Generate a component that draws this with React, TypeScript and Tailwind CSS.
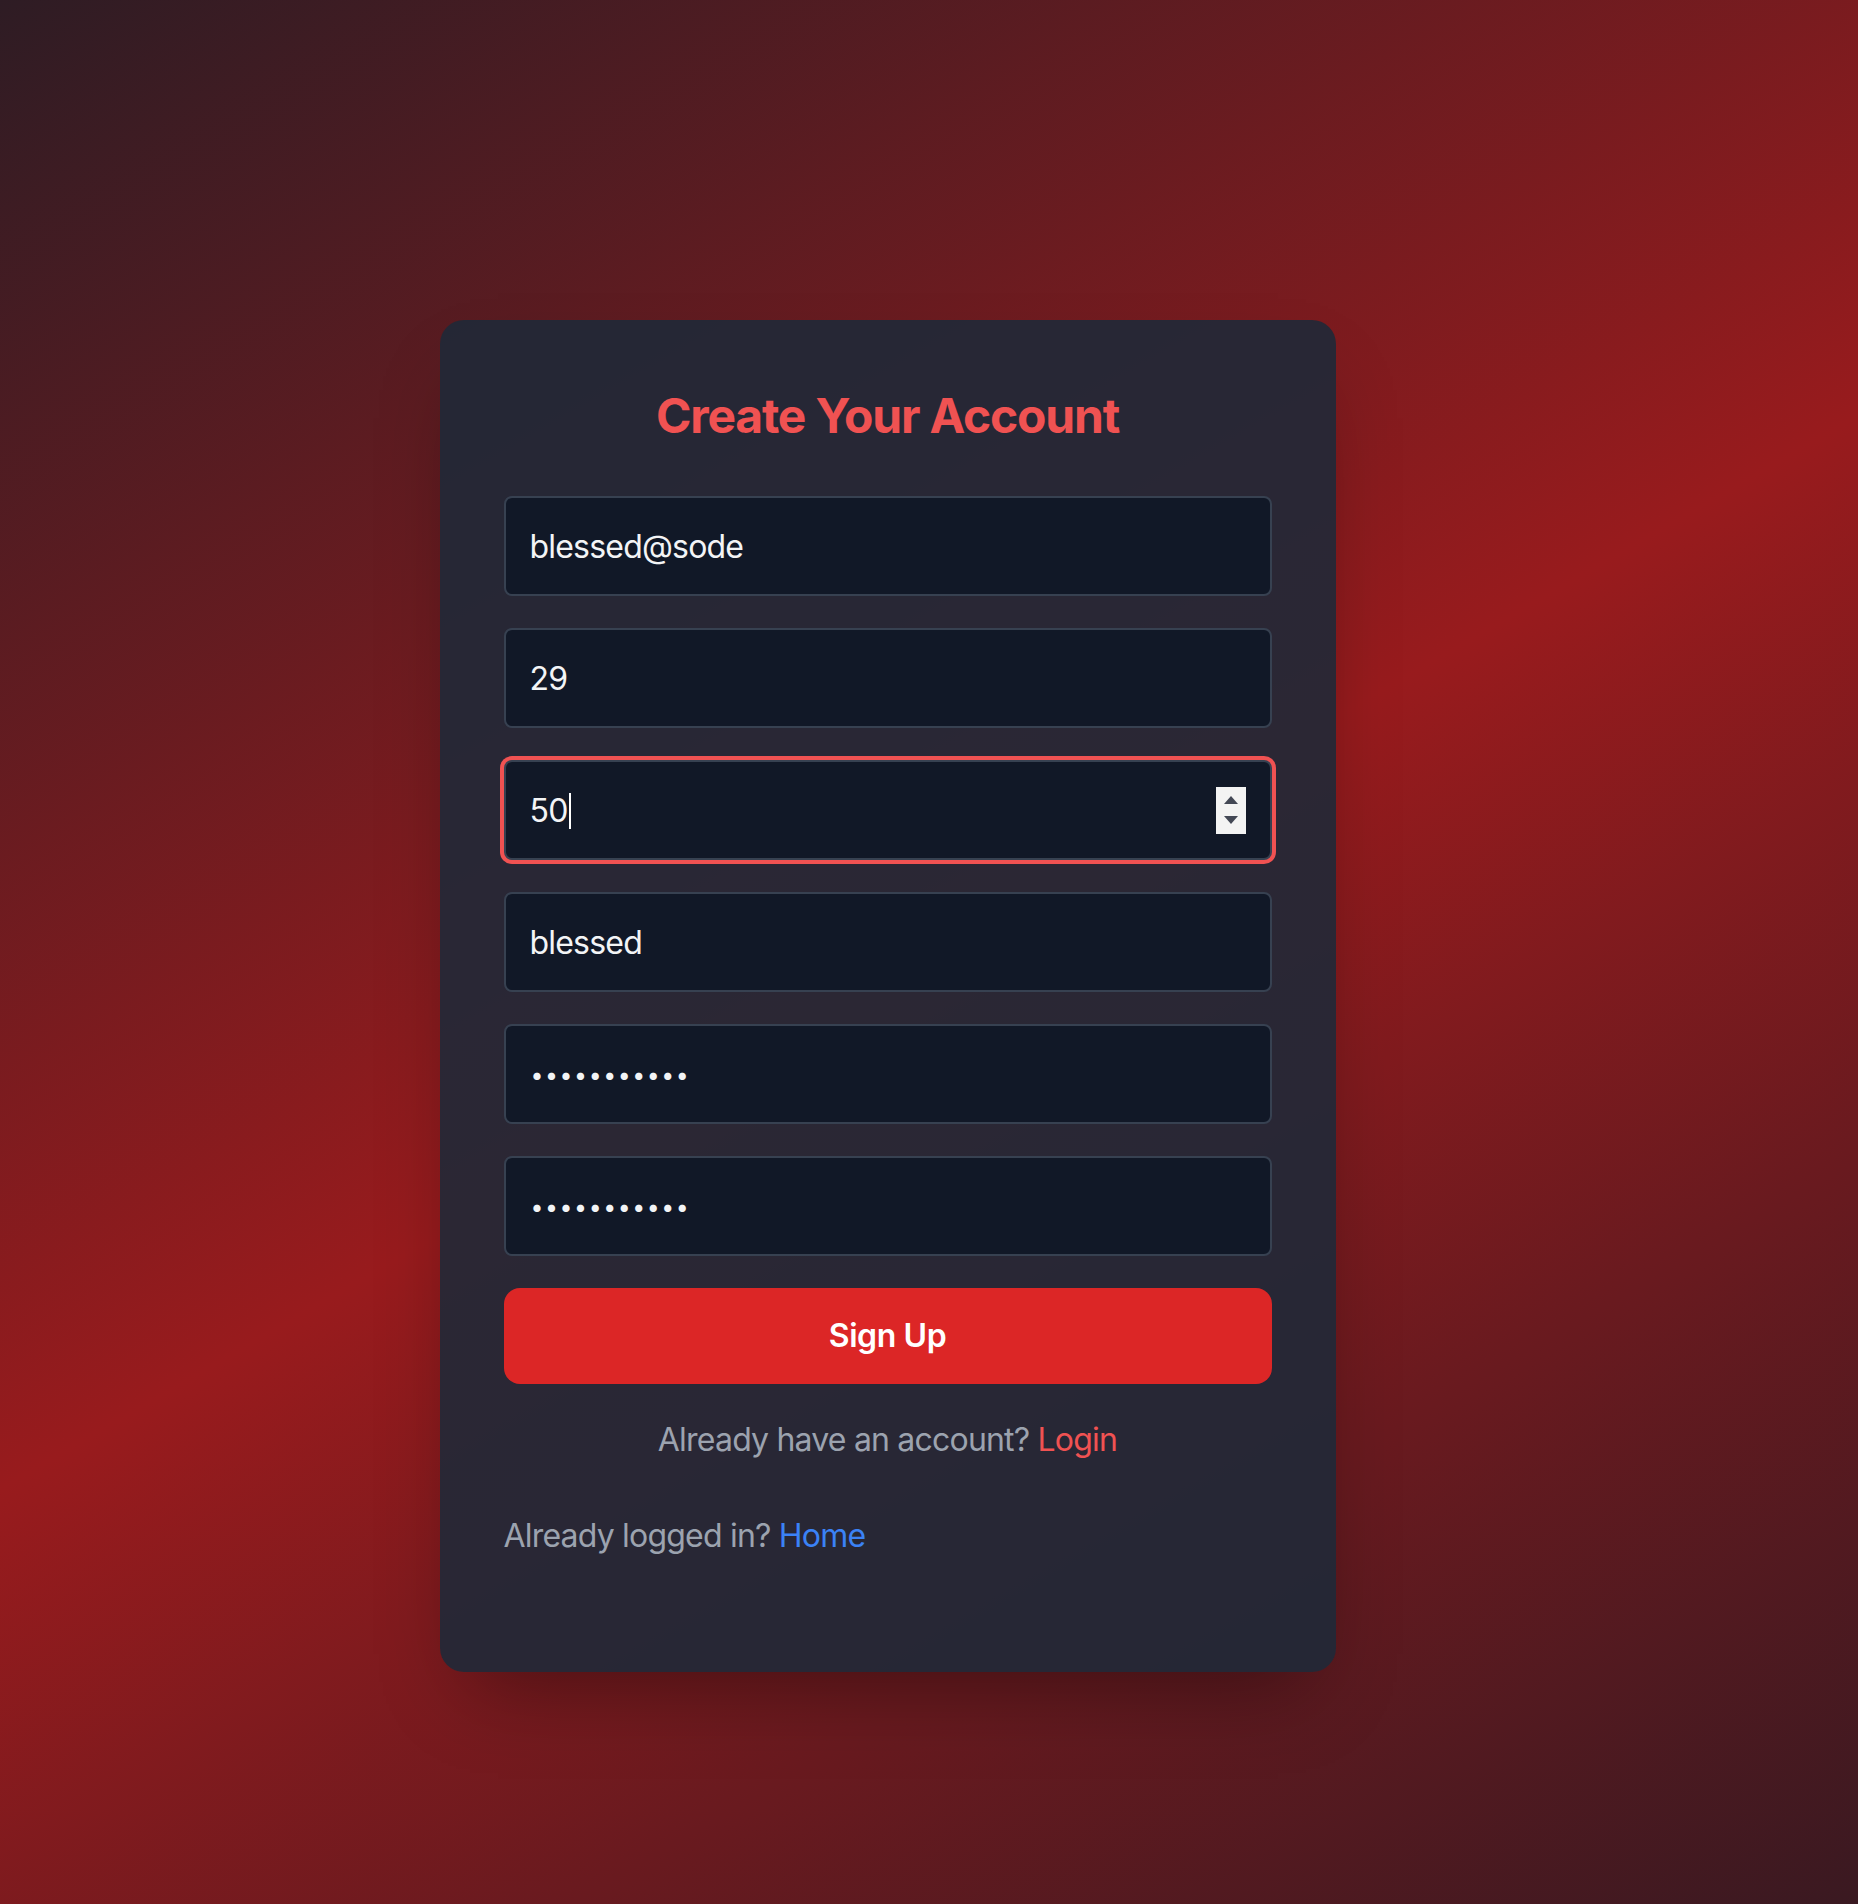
import React from "react";

const fieldBase =
  "w-full h-[100px] flex items-center justify-between px-6 pt-[2px] rounded-lg border-2 border-[#374151] bg-[#111827] text-[32px] leading-[48px] tracking-[-0.8px] text-[#f3f4f6]";

const Field: React.FC<{ children: React.ReactNode; focused?: boolean }> = ({
  children,
  focused,
}) => (
  <div className={`${fieldBase} ${focused ? "ring-4 ring-[#f05252]" : ""}`}>
    {children}
  </div>
);

// the little number spinner that macOS draws inside a focused number field
const Spinner = () => (
  <div className="w-[30px] h-[47px] -mt-[2px] bg-[#f3f3f3] flex flex-col items-center justify-center gap-[12px]">
    <svg width="14" height="8" viewBox="0 0 14 8">
      <path d="M7 0 L14 8 L0 8 Z" fill="#434855" />
    </svg>
    <svg width="14" height="8" viewBox="0 0 14 8">
      <path d="M0 0 L14 0 L7 8 Z" fill="#434855" />
    </svg>
  </div>
);

const Dots = () => (
  <span className="text-[23px] tracking-[1.6px] pl-[1px]">•••••••••••</span>
);

export default function App() {
  return (
    <div className="min-h-screen w-full bg-linear-[150deg] from-[#2e1c24] via-[#981b1d] to-[#3a1921] font-[Inter,sans-serif] flex justify-center pr-[83px] pt-[320px] pb-[232px]">
      <div className="w-[896px] rounded-3xl bg-[#1f2937]/90 shadow-[0_40px_80px_-30px_rgba(0,0,0,0.4)] px-16 pt-16 pb-[111px]">
        <h2 className="text-center text-[48px] leading-[64px] font-bold tracking-[-1.2px] text-[#f05252] mb-12">
          Create Your Account
        </h2>

        <form className="flex flex-col gap-8" onSubmit={(e) => e.preventDefault()}>
          <Field>
            <span>blessed@sode</span>
          </Field>
          <Field>
            <span>29</span>
          </Field>
          <Field focused>
            <span className="flex items-center">
              50
              <span className="inline-block w-[2px] h-[36px] bg-white ml-[1px]" />
            </span>
            <Spinner />
          </Field>
          <Field>
            <span>blessed</span>
          </Field>
          <Field>
            <Dots />
          </Field>
          <Field>
            <Dots />
          </Field>

          <button
            type="submit"
            className="w-full py-6 rounded-2xl bg-[#dc2626] text-white text-[32px] leading-[48px] font-semibold tracking-[-0.4px]"
          >
            Sign Up
          </button>
        </form>

        <p className="mt-8 text-center text-[32px] leading-[48px] tracking-[-0.8px] text-[#9ca3af]">
          Already have an account? <a className="text-[#f05252]">Login</a>
        </p>

        <p className="mt-12 text-[32px] leading-[48px] tracking-[-0.8px] text-[#9ca3af]">
          Already logged in? <a className="text-[#3b82f6]">Home</a>
        </p>
      </div>
    </div>
  );
}
